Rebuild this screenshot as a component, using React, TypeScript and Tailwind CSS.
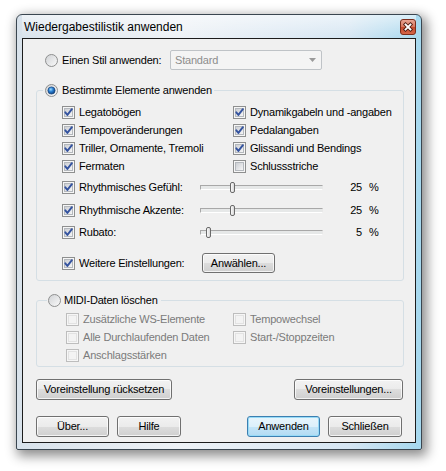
import React from "react";

function Check({ checked = false, disabled = false }: { checked?: boolean; disabled?: boolean }) {
  return (
    <svg width="13" height="13" viewBox="0 0 13 13" className="shrink-0">
      <defs>
        <linearGradient id="cbInner" x1="0" y1="0" x2="1" y2="1">
          <stop offset="0" stopColor="#c9ccd1" />
          <stop offset="1" stopColor="#f8f8f8" />
        </linearGradient>
      </defs>
      <rect x="0.5" y="0.5" width="12" height="12" fill="#f6f6f6" stroke={disabled ? "#bdbdbd" : "#8e8f8f"} />
      {disabled ? (
        <rect x="2.5" y="2.5" width="8" height="8" fill="#f3f3f3" stroke="#e2e2e2" />
      ) : (
        <rect x="2.5" y="2.5" width="8" height="8" fill="url(#cbInner)" stroke="#b4b8bd" />
      )}
      {checked && (
        <path d="M3.3 6.3 L5.4 8.9 L9.9 3.2" fill="none" stroke="#34539f" strokeWidth="1.9" strokeLinecap="round" strokeLinejoin="round" />
      )}
    </svg>
  );
}

function Radio({ checked = false }: { checked?: boolean }) {
  return (
    <svg width="13" height="13" viewBox="0 0 13 13" className="shrink-0">
      <defs>
        <linearGradient id="rdBg" x1="0" y1="0" x2="1" y2="1">
          <stop offset="0" stopColor="#cfd1d4" />
          <stop offset="1" stopColor="#fbfbfb" />
        </linearGradient>
        <radialGradient id="rdDot" cx="0.4" cy="0.35" r="0.7">
          <stop offset="0" stopColor="#9ddcff" />
          <stop offset="0.45" stopColor="#2a7fd2" />
          <stop offset="1" stopColor="#0b3a78" />
        </radialGradient>
      </defs>
      <circle cx="6.5" cy="6.5" r="6" fill="url(#rdBg)" stroke="#8e8f8f" />
      {checked && <circle cx="6.5" cy="6.5" r="3.6" fill="url(#rdDot)" stroke="#17427a" strokeWidth="0.7" />}
    </svg>
  );
}

function Btn({ children, w, isDefault = false }: { children: React.ReactNode; w: string; isDefault?: boolean }) {
  const base =
    "h-full flex items-center justify-center rounded-[3px] border leading-none " + w + " ";
  const look = isDefault
    ? "border-[#3c7fb1] bg-[linear-gradient(180deg,#e8f5fc_0%,#dcf0fb_50%,#c4e5f7_50%,#b2dbf3_100%)] shadow-[inset_0_0_0_1px_#97dbf7]"
    : "border-[#707070] bg-[linear-gradient(180deg,#f2f2f2_0%,#ebebeb_50%,#dddddd_50%,#cfcfcf_100%)] shadow-[inset_0_0_0_1px_rgba(255,255,255,0.75)]";
  return <div className={base + look}>{children}</div>;
}

function Slider({ pct }: { pct: number }) {
  const center = 2 + pct * 1.2;
  return (
    <div className="relative w-[123px] h-[11px] flex items-center shrink-0">
      <div className="w-full h-[5px] bg-[#e6e8e8] border border-[#a8a8a8] border-b-white border-r-[#e8e8e8]" />
      <div
        className="absolute top-0 w-[5px] h-[11px] rounded-[2px] border border-[#6a6a6a] bg-[linear-gradient(90deg,#fafafa,#d8d8d8)]"
        style={{ left: center - 2.5 }}
      />
    </div>
  );
}

function CloseBtn() {
  return (
    <svg width="16" height="16" viewBox="0 0 16 16" className="mt-[4px] self-start">
      <defs>
        <linearGradient id="clBg" x1="0" y1="0" x2="0" y2="1">
          <stop offset="0" stopColor="#e9a898" />
          <stop offset="0.5" stopColor="#d7745c" />
          <stop offset="0.51" stopColor="#c54a2e" />
          <stop offset="1" stopColor="#d6684a" />
        </linearGradient>
      </defs>
      <rect x="0.5" y="0.5" width="15" height="15" rx="2.5" fill="url(#clBg)" stroke="#7a2d1c" />
      <path d="M5.5 5.5 L10.5 10.5 M10.5 5.5 L5.5 10.5" stroke="#4b1a10" strokeWidth="3.6" strokeLinecap="square" />
      <path d="M5.5 5.5 L10.5 10.5 M10.5 5.5 L5.5 10.5" stroke="#ffffff" strokeWidth="1.8" strokeLinecap="square" />
    </svg>
  );
}

const sliders = [
  { label: "Rhythmisches Gefühl:", pct: 25, mt: "mt-[1px]" },
  { label: "Rhythmische Akzente:", pct: 25, mt: "mt-[1px]" },
  { label: "Rubato:", pct: 5, mt: "mt-0" },
];

export default function App() {
  return (
    <div className="w-[446px] h-[471px] bg-white pt-[14px] pl-[16px] font-['Liberation_Sans',Arial,sans-serif] text-[11px] tracking-[-0.2px] text-black">
      <div className="w-[406px] h-[436px] flex flex-col border border-[#3a4650] rounded-t-[6px] rounded-b-[2px] bg-[linear-gradient(90deg,#d8e2eb_0%,#eef2f6_40%,#d6e6f3_82%,#a6d8ee_100%)] shadow-[3px_4px_12px_2px_rgba(0,0,0,0.45)] px-[5px] pb-[6px]">
        <div className="h-[23px] shrink-0 flex items-center justify-between pl-[2px] bg-[linear-gradient(180deg,rgba(255,255,255,0.55),rgba(255,255,255,0))]">
          <span className="text-[12px] tracking-normal leading-none">Wiedergabestilistik anwenden</span>
          <CloseBtn />
        </div>
        <div className="flex-1 border border-[#1c1c1c] bg-[#f0f0f0] pl-[13px] pr-[11px] flex flex-col">
          {/* Row 1 */}
          <div className="mt-[11px] h-[20px] flex items-center">
            <div className="w-[134px] flex items-center pl-[9px]">
              <Radio />
              <span className="ml-[4px] leading-none">Einen Stil anwenden:</span>
            </div>
            <div className="w-[152px] h-[20px] border border-[#bfc3c7] rounded-[2px] bg-[#f4f4f4] flex items-center pl-[4px] pr-[5px] text-[#8d8d8d]">
              <span className="flex-1 leading-none">Standard</span>
              <svg width="7" height="4" viewBox="0 0 7 4">
                <path d="M0 0 H7 L3.5 4 Z" fill="#9a9a9a" />
              </svg>
            </div>
          </div>

          {/* Group 1 */}
          <fieldset className="mt-[13px] border border-[#d5dfe5] rounded-[3px] pb-[7px]">
            <legend className="ml-[6px] px-[2px]">
              <span className="h-[14px] flex items-center">
                <Radio checked />
                <span className="ml-[4px] leading-none">Bestimmte Elemente anwenden</span>
              </span>
            </legend>
            <div className="mt-[6px] pl-[25px] grid grid-cols-[171px_1fr] auto-rows-[18px]">
              {[
                ["Legatobögen", true],
                ["Dynamikgabeln und -angaben", true],
                ["Tempoveränderungen", true],
                ["Pedalangaben", true],
                ["Triller, Ornamente, Tremoli", true],
                ["Glissandi und Bendings", true],
                ["Fermaten", true],
                ["Schlussstriche", false],
              ].map(([label, c]) => (
                <div key={label as string} className="flex items-center gap-[4px]">
                  <Check checked={c as boolean} />
                  <span className="leading-none">{label as string}</span>
                </div>
              ))}
            </div>
            {sliders.map((s) => (
              <div key={s.label} className={`pl-[25px] ${s.mt} h-[22px] flex items-center`}>
                <div className="w-[138px] flex items-center gap-[4px]">
                  <Check checked />
                  <span className="leading-none">{s.label}</span>
                </div>
                <Slider pct={s.pct} />
                <span className="w-[39px] text-right leading-none">{s.pct}</span>
                <span className="ml-[7px] leading-none">%</span>
              </div>
            ))}
            <div className="pl-[25px] mt-[10px] h-[20px] flex items-center">
              <div className="w-[140px] flex items-center gap-[4px]">
                <Check checked />
                <span className="leading-none">Weitere Einstellungen:</span>
              </div>
              <div className="h-[20px]">
                <Btn w="w-[73px]">Anwählen...</Btn>
              </div>
            </div>
          </fieldset>

          {/* Group 2 */}
          <fieldset className="mt-[12px] border border-[#d5dfe5] rounded-[3px] pb-[2px]">
            <legend className="ml-[10px] pl-[1px] pr-[3px]">
              <span className="h-[14px] flex items-center">
                <Radio />
                <span className="ml-[3px] leading-none">MIDI-Daten löschen</span>
              </span>
            </legend>
            <div className="mt-[3px] pl-[29px] grid grid-cols-[167px_1fr] auto-rows-[18px] text-[#7b7b7b]">
              {["Zusätzliche WS-Elemente", "Tempowechsel", "Alle Durchlaufenden Daten", "Start-/Stoppzeiten", "Anschlagsstärken"].map(
                (label) => (
                  <div key={label} className="flex items-center gap-[4px]">
                    <Check disabled />
                    <span className="leading-none">{label}</span>
                  </div>
                )
              )}
            </div>
          </fieldset>

          {/* Buttons */}
          <div className="mt-[12px] h-[21px] flex justify-between pr-[1px]">
            <Btn w="w-[136px]">Voreinstellung rücksetzen</Btn>
            <Btn w="w-[109px]">Voreinstellungen...</Btn>
          </div>
          <div className="mt-[16px] h-[21px] flex">
            <Btn w="w-[73px]">Über...</Btn>
            <div className="ml-[8px] h-full">
              <Btn w="w-[64px]">Hilfe</Btn>
            </div>
            <div className="ml-[66px] h-full">
              <Btn w="w-[73px]" isDefault>
                Anwenden
              </Btn>
            </div>
            <div className="ml-[8px] h-full">
              <Btn w="w-[74px]">Schließen</Btn>
            </div>
          </div>
        </div>
      </div>
    </div>
  );
}
